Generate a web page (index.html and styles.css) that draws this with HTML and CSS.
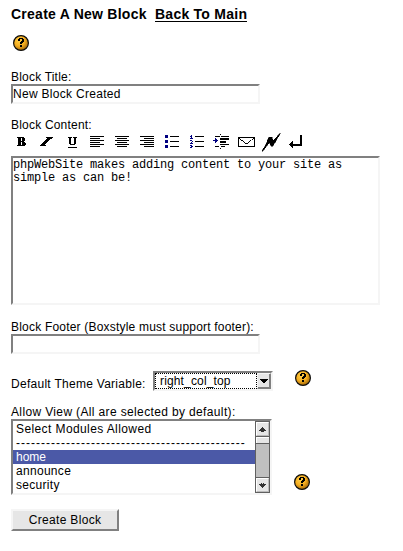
FILE: index.html
```
<!DOCTYPE html>
<html lang="en">
<head>
<meta charset="utf-8">
<title>Create A New Block</title>
<link rel="stylesheet" href="styles.css">
</head>
<body>
<svg class="defs" width="0" height="0" aria-hidden="true">
  <defs>
    <radialGradient id="gold" cx="40%" cy="35%" r="65%">
      <stop offset="0" stop-color="#ffd04a"/><stop offset=".55" stop-color="#f5ae20"/><stop offset="1" stop-color="#a66a08"/>
    </radialGradient>
    <symbol id="help" viewBox="0 0 16 16">
      <circle cx="8" cy="8" r="7.4" fill="url(#gold)" stroke="#0c0c0c" stroke-width="1.2"/>
      <path d="M6 3h4v1h1v3h-1v1H9v1H7V7h1V6h1V4H7v2H5V4h1zM7 10h2v2H7z" fill="#000" shape-rendering="crispEdges"/>
    </symbol>
  </defs>
</svg>
<form class="page">
  <h1 class="title"><span class="heading">Create A New Block</span><a class="back">Back To Main</a></h1>
  <svg class="help"><use href="#help"/></svg>

  <label class="label label-title"><span class="t1">Block Title:</span></label>
  <input class="field" type="text" value="New Block Created">

  <label class="label label-content"><span class="t2">Block Content:</span></label>
  <svg class="toolbar" width="300" height="20" viewBox="11 132 300 20" shape-rendering="crispEdges">
    <path d="M17 137h7v1h1v3h-1v1h1v1h1v2h-1v1h-8v-1h1v-7h-1zM21 138v3h1v-3zM21 142v3h1v-3z" fill-rule="evenodd"/>
    <path d="M46 137h7v1h-1v1h-2v1h-1v1h-1v1h-1v1h-1v1h-1v1h1v1h-6v-1h1v-1h1v-1h1v-1h1v-1h1v-1h1v-1h1v-1h-2z"/>
    <path d="M68 137h4v1h-1v6h3v-6h-1v-1h4v1h-1v6h-1v1h-5v-1h-1v-6h-1zM68 147h9v1h-9z"/>
    <path d="M90 136h14v1H90zM90 138h10v1H90zM90 140h14v1H90zM90 142h10v1H90zM90 144h14v1H90zM90 146h10v1H90z"/>
    <path d="M115 136h14v1h-14zM117 138h10v1h-10zM115 140h14v1h-14zM117 142h10v1h-10zM115 144h14v1h-14zM117 146h10v1h-10z"/>
    <path d="M140 136h14v1h-14zM144 138h10v1h-10zM140 140h14v1h-14zM144 142h10v1h-10zM140 144h14v1h-14zM144 146h10v1h-10z"/>
    <path d="M165 135h3v3h-3zM165 140h3v3h-3zM165 145h3v3h-3z" fill="#000080"/>
    <path d="M170 136h9v1h-9zM170 141h9v1h-9zM170 146h9v1h-9zM195 136h9v1h-9zM195 141h9v1h-9zM195 146h9v1h-9z"/>
    <path d="M191 135h1v3h1v1h-3v-1h1v-1h-1v-1h1zM190 140h2v1h1v1h-1v1h1v1h-3v-1h1v-1h1v-1h-2zM190 145h2v1h1v1h-1v1h-2v-1h1v-1h-1z" fill="#000080"/>
    <path d="M215 136h5v1h-5zM221 136h8v1h-8zM220 138h9v2h-9zM220 141h6v2h-6zM220 144h9v1h-9zM215 146h4v1h-4zM221 146h4v1h-4zM220 134h1v1h-1zM220 148h1v1h-1z"/>
    <path d="M213 140h2v-2h1v1h1v1h1v1h-1v1h-1v1h-1v-2h-2z" fill="#000080"/>
    <path d="M238 137h17v10h-17zM239 138v8h15v-8z" fill-rule="evenodd"/>
    <path d="M239 138h1v1h1v1h2v1h1v1h1v1h3v-1h1v-1h1v-1h2v-1h1v-1h1v1h-1v1h-2v1h-1v1h-1v1h-1v1h-3v-1h-1v-1h-1v-1h-2v-1h-1v-1h-1z"/>
    <path d="M262 151l4-7 3-7h3l1 3 1 0 6-7v1l-7 12h-2l-1-3h-1l-6 8z" stroke="#000" stroke-width=".5"/>
    <path d="M300 135h2v11h-9v2h-1v-1h-1v-1h-1v-1h-1v-1h1v-1h1v-1h1v-1h1v3h7z"/>
  </svg>
  <textarea class="area">phpWebSite makes adding content to your site as simple as can be!</textarea>

  <label class="label label-footer"><span class="t3">Block Footer (Boxstyle must support footer):</span></label>
  <input class="field" type="text">

  <div class="theme-row">
    <label class="label label-theme"><span class="t4">Default Theme Variable:</span></label>
    <div class="dropdown"><div class="choice"><span class="t5">right_col_top</span></div><div class="drop-button"><svg width="8" height="4" shape-rendering="crispEdges"><path d="M0 0h8v1H7v1H6v1H5v1H3V3H2V2H1V1H0z"/></svg></div></div>
    <svg class="help help-theme"><use href="#help"/></svg>
  </div>

  <label class="label label-allow"><span class="t6">Allow View (All are selected by default):</span></label>
  <div class="list-row">
    <div class="list">
      <div class="options">
        <div><span class="o1">Select Modules Allowed</span></div>
        <div class="dashes"><span>----------------------------------------------</span></div>
        <div class="selected"><span>home</span></div>
        <div><span class="o3">announce</span></div>
        <div><span class="o3">security</span></div>
      </div>
      <div class="scrollbar">
        <div class="arrow"><svg width="7" height="5" shape-rendering="crispEdges"><path d="M3 0h1v1h1v1h1v1h1v1H5v1H2V4H0V3h1V2h1V1h1z" fill="#333"/></svg></div>
        <div class="thumb"></div>
        <div class="track"></div>
        <div class="arrow"><svg width="7" height="5" shape-rendering="crispEdges"><path d="M3 5h1V4h1V3h1V2h1V1H5V0H4v1H3V0H2v1H0v1h1v1h1v1h1z" fill="#333"/></svg></div>
      </div>
    </div>
    <svg class="help help-list"><use href="#help"/></svg>
  </div>
  <button class="submit" type="button"><span>Create Block</span></button>
</form>
</body>
</html>
```

FILE: styles.css
```
* { box-sizing: border-box; }
html, body { margin: 0; background: #fff; overflow: hidden; }
body { font: 12px/14px "Liberation Sans", Arial, sans-serif; color: #000; }
svg { display: block; }
.defs { height: 0; }
.page { padding: 6px 0 0 11px; margin: 0; }
.title { display: flex; margin: 0; height: 16px; font-size: 14px; line-height: 16px; white-space: nowrap; letter-spacing: .25px; }
.heading { width: 144px; }
.back { height: 16px; border-bottom: 1px solid #000; }
.help { width: 16px; height: 16px; margin: 13px 0 0 2px; }
.label { display: block; height: 14px; white-space: nowrap; }
.t1, .t2, .t3 { letter-spacing: .2px; }
.t4 { letter-spacing: .28px; }
.t5 { letter-spacing: .15px; }
.t6 { letter-spacing: .36px; }
.o1 { letter-spacing: .4px; }
.o3 { letter-spacing: .3px; }
.dashes span { letter-spacing: 1px; }
.label-title { margin-top: 19px; }
.field {
  display: block; width: 249px; height: 20px; margin: 0; padding: 0 0 1px;
  border: 2px solid; border-color: #808080 #f5f5f5 #f5f5f5 #808080;
  border-radius: 0; outline: 0; background: #fff; color: #000;
  font: 12px/14px "Liberation Sans", Arial, sans-serif; letter-spacing: .3px;
}
.label-content { margin-top: 14px; }
.toolbar { width: 300px; height: 20px; }
.area {
  display: block; width: 369px; height: 149px; margin: 4px 0 0; padding: 1px 0 0;
  border: 2px solid; border-color: #808080 #f5f5f5 #f5f5f5 #808080;
  border-radius: 0; resize: none; overflow: hidden; outline: 0; background: #fff; color: #000;
  font: 12px/13px "Liberation Mono", monospace; letter-spacing: -.2px;
}
.label-footer { margin-top: 15px; }
.theme-row { display: flex; height: 21px; margin-top: 16px; }
.label-theme { width: 142px; padding-top: 7px; }
.dropdown { display: flex; width: 120px; height: 20px; margin-top: 1px; border: 2px solid; border-color: #808080 #f5f5f5 #f5f5f5 #808080; }
.choice { width: 102px; height: 16px; border: 1px dotted #000; padding-left: 4px; line-height: 14px; }
.drop-button { display: flex; align-items: center; justify-content: center; width: 14px; height: 16px; background: #e6e6e6; border: 1px solid; border-color: #f5f5f5 #808080 #808080 #f5f5f5; box-shadow: inset -1px -1px #808080; }
.help-theme { margin: 0 0 0 22px; }
.label-allow { margin-top: 14px; }
.list-row { display: flex; height: 76px; margin-top: 0; }
.list { display: flex; width: 261px; height: 76px; border: 2px solid; border-color: #808080 #f5f5f5 #f5f5f5 #808080; }
.options { width: 242px; padding-top: 1px; white-space: nowrap; }
.options > div { height: 14px; padding-left: 3px; overflow: hidden; }
.options .selected { background: #4b59a7; color: #fff; }
.scrollbar { display: flex; flex-direction: column; width: 15px; height: 72px; border: 1px solid #606060; background: #c0c0c0; }
.arrow { display: flex; align-items: center; justify-content: center; height: 14px; background: #e6e6e6; border: 1px solid; border-color: #fff #bbb #bbb #fff; }
.thumb { height: 8px; background: #e6e6e6; border: solid #606060; border-width: 1px 0; box-shadow: inset 1px 1px #fff; }
.track { flex: 1; border-bottom: 1px solid #606060; }
.help-list { margin: 55px 0 0 22px; }
.submit {
  display: block; width: 108px; height: 22px; margin: 14px 0 0; padding: 0;
  border: 2px solid; border-color: #f5f5f5 #808080 #808080 #f5f5f5; border-radius: 0;
  background: #e6e6e6; color: #000; font: 12px/16px "Liberation Sans", Arial, sans-serif; letter-spacing: .33px;
}
```
